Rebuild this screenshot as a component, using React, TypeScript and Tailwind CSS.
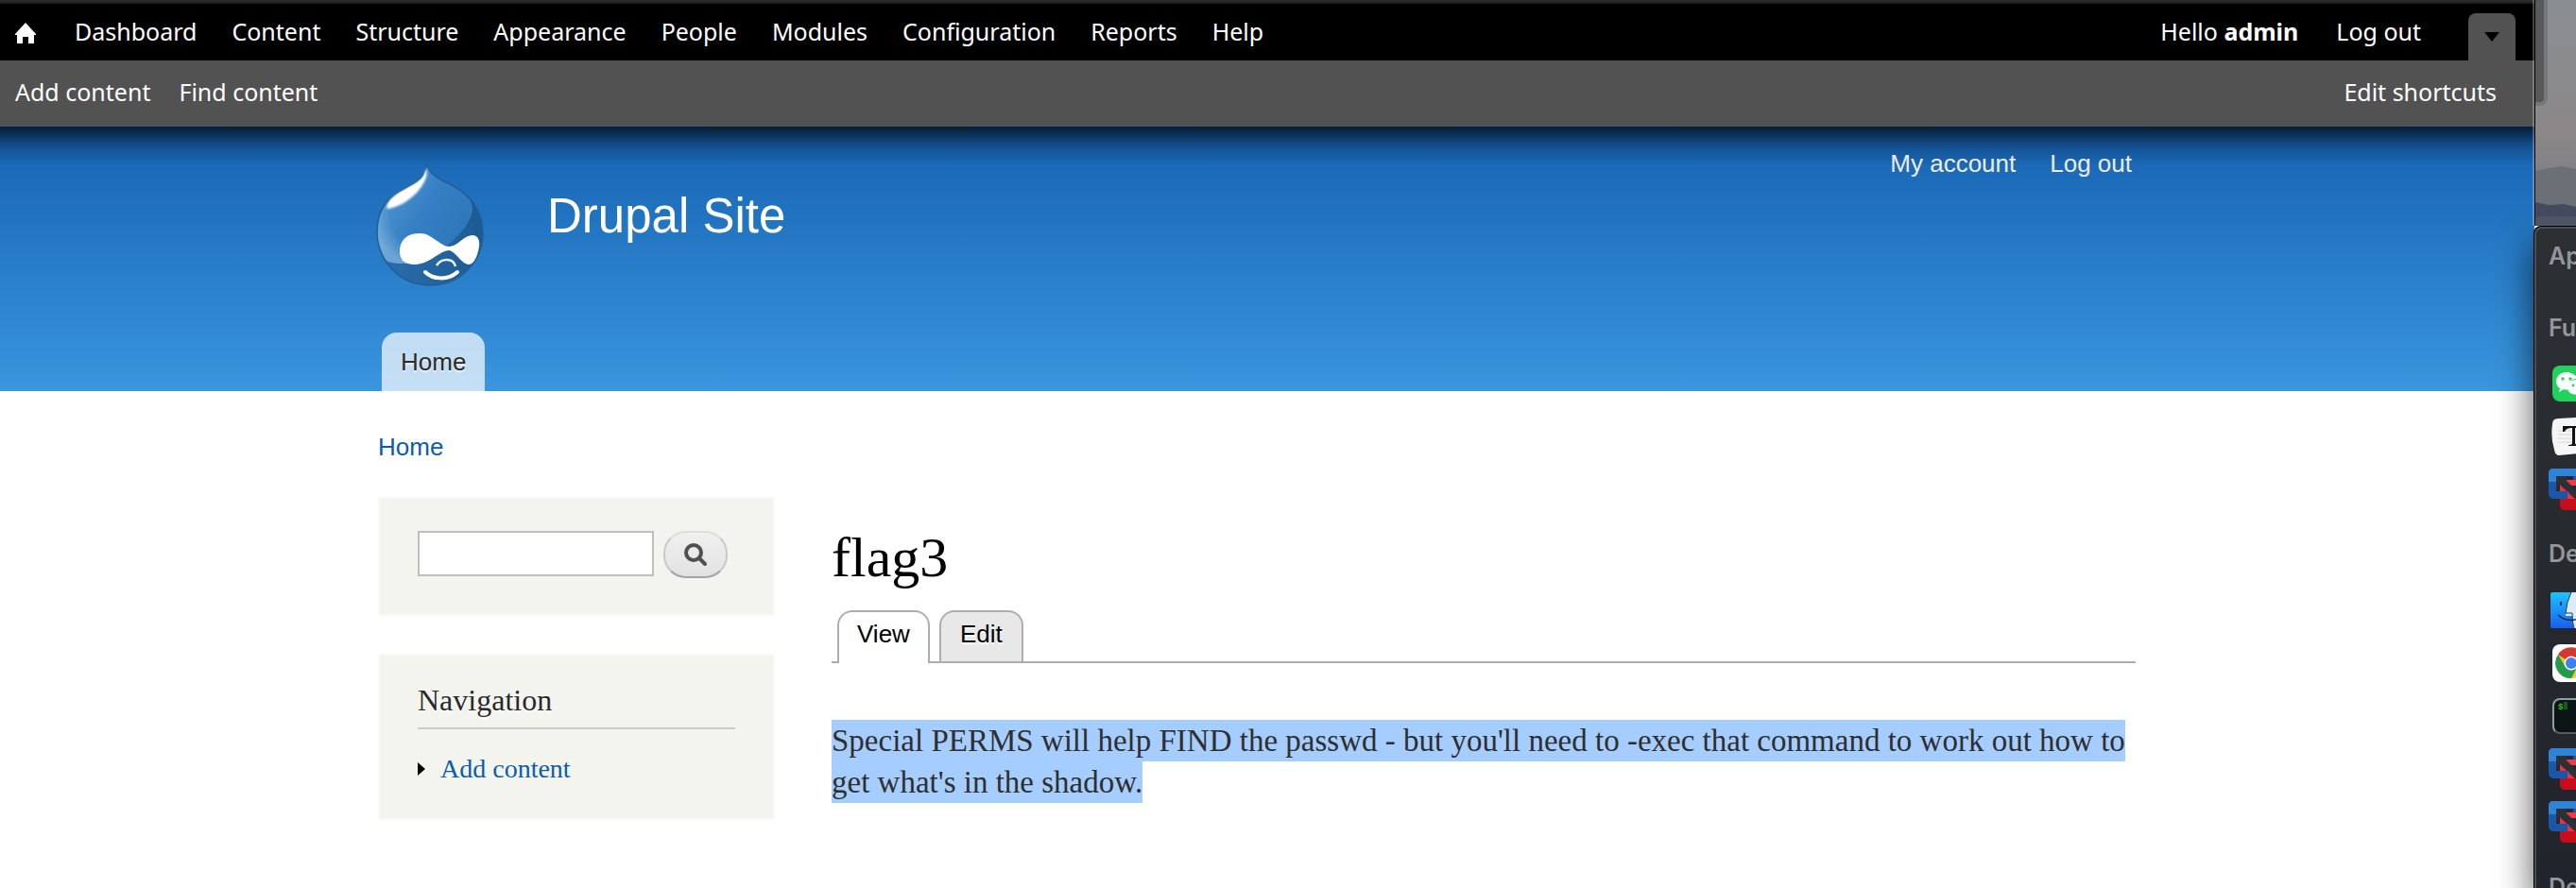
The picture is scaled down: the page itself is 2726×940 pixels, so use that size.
import React from "react";

const menu = ["Dashboard", "Content", "Structure", "Appearance", "People", "Modules", "Configuration", "Reports", "Help"];

function HomeIcon() {
  return (
    <svg viewBox="0 0 22 22" className="h-[22px] w-[22px]" fill="#fff" aria-hidden="true">
      <path d="M11 0 L22 12 L22 13 L20 13 L20 22 L14 22 L14 15 L8 15 L8 22 L2 22 L2 13 L0 13 L0 12 Z" />
    </svg>
  );
}

function Toolbar() {
  return (
    <div className="font-['Noto_Sans',sans-serif] text-[25px] leading-[34px] text-white">
      <div className="h-1 border-b-2 border-[#1d1b1c] bg-[#2c2a2b]" />
      <nav aria-label="Administration" className="flex h-[60px] items-stretch justify-between bg-black pr-5 pl-4 whitespace-nowrap">
        <ul className="flex items-center gap-[37px] pb-[3px]">
          <li className="mr-1 pt-1">
            <a href="#home" aria-label="Administration home" className="block"><HomeIcon /></a>
          </li>
          {menu.map((item) => (
            <li key={item}><a href={"#" + item.toLowerCase()}>{item}</a></li>
          ))}
        </ul>
        <div className="flex items-stretch">
          <div className="mr-[50px] flex items-center gap-10 pb-[3px]">
            <a href="#user">Hello <strong className="font-bold">admin</strong></a>
            <a href="#logout">Log out</a>
          </div>
          <button type="button" aria-label="Hide shortcuts" className="mt-[10px] flex h-[50px] w-[50px] items-center justify-center rounded-t-lg bg-[#525252]">
            <svg viewBox="0 0 16 10" className="h-[10px] w-4" aria-hidden="true"><path d="M0 0H16L8 10Z" fill="#000" /></svg>
          </button>
        </div>
      </nav>
      <div className="flex h-[70px] items-center justify-between bg-[#525252] pr-10 pb-[5px] pl-4">
        <div className="flex gap-[30px]">
          <a href="#add">Add content</a>
          <a href="#find">Find content</a>
        </div>
        <a href="#shortcuts">Edit shortcuts</a>
      </div>
    </div>
  );
}

function Druplicon() {
  return (
    <svg viewBox="0 0 114 130" className="h-[130px] w-[114px]" role="img" aria-label="Drupal">
      <defs>
        <linearGradient id="drop" x1="0" y1="0.1" x2="1" y2="0.8">
          <stop offset="0" stopColor="#5c9bd2" />
          <stop offset="0.5" stopColor="#3580c4" />
          <stop offset="1" stopColor="#2b74b8" />
        </linearGradient>
        <linearGradient id="shade" x1="0" y1="0" x2="1" y2="0">
          <stop offset="0" stopColor="#2b6fae" />
          <stop offset="1" stopColor="#1d5a93" />
        </linearGradient>
        <radialGradient id="rim" cx="0.55" cy="0.45" r="0.6">
          <stop offset="0.7" stopColor="#8fbde3" stopOpacity="0" />
          <stop offset="1" stopColor="#8fbde3" stopOpacity="0.6" />
        </radialGradient>
        <filter id="soft" x="-20%" y="-20%" width="140%" height="140%"><feGaussianBlur stdDeviation="1" /></filter>
        <clipPath id="dropClip"><path d="M53 0C55 8 63 15 74 20C96 30 113 47 113 74C113 105 88 129 57 129C25 129 1 103 1 72C1 52 9 39 24 30C38 22 53 17 53 0Z" /></clipPath>
      </defs>
      <g clipPath="url(#dropClip)">
        <rect width="114" height="130" fill="url(#shade)" />
        <path d="M53 0C60 14 72 19 82 24C98 34 104 42 101 53C97 68 86 78 74 88C60 100 46 106 24 106C13 105 7 103 0 94V0Z" fill="url(#drop)" />
        <path d="M53 0C60 14 72 19 82 24C98 34 104 42 101 53C97 68 86 78 74 88C60 100 46 106 24 106C13 105 7 103 0 94V0Z" fill="url(#rim)" />
      </g>
      <path d="M53 0C55 8 63 15 74 20C96 30 113 47 113 74C113 105 88 129 57 129C25 129 1 103 1 72C1 52 9 39 24 30C38 22 53 17 53 0Z" fill="none" stroke="#245f97" strokeWidth="1.6" />
      <path d="M53 4C56 12 51 22 43 31C33 41 22 47 11 48C12 38 22 32 32 27C43 21 53 16 53 4Z" fill="#fff" filter="url(#soft)" />
      <path d="M52 7C54 14 47 24 39 31C30 39 20 44 12 45C15 37 23 32 32 27C42 21 52 17 52 7Z" fill="#fff" />
      <path d="M46 74C58 73 68 88 77 88C86 88 93 76 102 76C108 76 110 82 109 88C108 96 104 107 98 107C91 107 83 92 77 92C68 92 56 107 41 107C30 107 25 102 25 93C25 81 33 74 46 74Z" fill="#fff" />
      <path d="M64 108C67 103 71 102 75 102C80 102 83 105 84 109" fill="none" stroke="#e8f1f8" strokeWidth="2.6" />
      <path d="M52 115C60 123 76 124 86 115" fill="none" stroke="#fff" strokeWidth="4" strokeLinecap="round" />
    </svg>
  );
}

function Header() {
  return (
    <header className="h-[280px] bg-[linear-gradient(to_bottom,rgba(0,0,0,0.7)_0,rgba(0,0,0,0.52)_8px,rgba(0,0,0,0.32)_16px,rgba(0,0,0,0.14)_26px,rgba(0,0,0,0)_42px),linear-gradient(to_bottom,#1562b1,#3a96de)] pr-[22px] font-['Liberation_Sans',Arial,sans-serif]">
      <div className="mx-auto flex h-full max-w-[1860px] flex-col justify-between">
        <div className="flex items-start">
          <a href="#front" className="mt-[39px] -ml-0.5"><Druplicon /></a>
          <a href="#front" className="mt-[66px] ml-[67px] text-[51px] leading-[58px] text-white">Drupal Site</a>
          <nav aria-label="User menu" className="mt-6 ml-auto flex gap-9 pr-1 text-[26px] leading-[30px] text-[#ececf0]">
            <a href="#account">My account</a>
            <a href="#logout">Log out</a>
          </nav>
        </div>
        <nav aria-label="Main menu" className="pl-1">
          <a href="#front" className="inline-block h-[62px] rounded-t-2xl bg-white/70 px-5 pt-4 align-bottom text-[26px] leading-[30px] text-[#2a2a2a] [text-shadow:0_2px_1px_#eee]">Home</a>
        </nav>
      </div>
    </header>
  );
}

function Sidebar() {
  return (
    <aside className="w-[420px] shrink-0 font-['Liberation_Serif',Georgia,serif]">
      <form role="search" onSubmit={(e) => e.preventDefault()} className="flex h-[126px] items-start gap-[10px] border-2 border-[#f8f8f7] bg-[#f3f4ee] px-10 pt-[34px]">
        <input type="text" aria-label="Search" className="h-12 w-[250px] border-2 border-[#bfbfbd] bg-white px-2 text-[26px] outline-none" />
        <button type="submit" aria-label="Search" className="flex h-[50px] w-[68px] items-center justify-center rounded-3xl border-2 border-[#c9c9c9] border-t-[#dedede] border-b-[#a3a3a3] bg-linear-to-b from-[#f0f0f0] to-[#e2e2e2]">
          <svg viewBox="0 0 26 26" className="h-[26px] w-[26px]" fill="none" stroke="#505050" aria-hidden="true">
            <circle cx="11" cy="11" r="8" strokeWidth="4" />
            <path d="M17 17L23 23" strokeWidth="4" strokeLinecap="round" />
          </svg>
        </button>
      </form>
      <section className="mt-10 h-[176px] border-2 border-[#f8f8f7] bg-[#f3f4ee] px-10 pt-7">
        <h2 className="border-b-2 border-[#cbcbc8] pb-[10px] text-[32px] leading-[38px] text-[#2a2a2a] [text-shadow:0_2px_0_#fff]">Navigation</h2>
        <ul className="pt-[26px]">
          <li className="flex items-center gap-4 text-[28px] leading-8 text-[#0b5cab]">
            <svg viewBox="0 0 8 14" className="h-[14px] w-2" aria-hidden="true"><path d="M0 0L8 7L0 14Z" fill="#000" /></svg>
            <a href="#add">Add content</a>
          </li>
        </ul>
      </section>
    </aside>
  );
}

function Article() {
  return (
    <article className="min-w-0 flex-1 font-['Liberation_Serif',Georgia,serif]">
      <h1 className="pt-[30px] text-[60px] leading-[68px] text-black">flag3</h1>
      <div className="mt-[22px] flex h-14 items-end gap-[10px] border-b-2 border-[#adadad] pl-1.5 font-['Liberation_Sans',Arial,sans-serif] text-[26px] leading-[30px] text-black">
        <a href="#view" className="-mb-0.5 h-14 rounded-t-2xl border-2 border-b-0 border-[#adadad] bg-white px-[19px] pt-2">View</a>
        <a href="#edit" className="h-[54px] rounded-t-2xl border-2 border-b-0 border-[#adadad] bg-[#e8e8e8] px-5 pt-2 [text-shadow:0_2px_0_#fff]">Edit</a>
      </div>
      <p className="pt-[60px] text-[33px] leading-[44px] text-[#2f2f2f]">
        <mark className="bg-[#a5cdff] pt-1 pb-1 text-inherit">
          Special PERMS will help FIND the passwd - but you&apos;ll need to -exec that command to work out how to get what&apos;s in the shadow.
        </mark>
      </p>
    </article>
  );
}

function WeChat() {
  return (
    <svg viewBox="0 0 38 38" className="h-[38px] w-[38px] shrink-0" aria-hidden="true">
      <rect width="38" height="38" rx="8" fill="#1fd35c" />
      <path d="M15 7C9 7 4 11 4 17C4 20 6 23 8 24L7 28L12 25Q14 26 17 25C16 18 21 13 27 14C25 10 20 7 15 7Z" fill="#fff" />
      <path d="M26 15C20 15 16 18 16 23C16 29 22 32 28 30L32 32L31 29C39 23 34 15 26 15Z" fill="#fff" />
      <g fill="#1fd35c"><circle cx="11" cy="14" r="1.7" /><circle cx="19" cy="14" r="1.7" /><circle cx="22" cy="21" r="1.4" /><circle cx="29" cy="21" r="1.4" /></g>
    </svg>
  );
}

function Typora() {
  return (
    <svg viewBox="0 0 42 42" className="h-[42px] w-[42px] shrink-0" aria-hidden="true">
      <path d="M2 8Q2 2 8 2L42 0V38L9 41Q5 41 4 35Q0 22 2 8Z" fill="#f5f5f5" />
      <path d="M8 15H26M8 19H26M8 23H26M8 27H26" stroke="#d5d5d5" />
      <path d="M13 10H35V16H33Q32 12 26 12V28Q26 30 30 30V31H19V30Q23 30 23 28V12Q16 12 15 16H13Z" fill="#111" />
    </svg>
  );
}

function Fusion() {
  return (
    <svg viewBox="0 0 44 44" className="h-11 w-11 shrink-0" aria-hidden="true">
      <path d="M12 24H44V44H18Q12 44 12 38Z" fill="#c50d1c" />
      <path d="M8 8H44V30H8Z" fill="#252b30" />
      <path d="M18 12H44V18H24Z" fill="#ee3a47" />
      <path d="M0 5Q0 0 5 0H44V12H26V8H8V24H22V32H6Q0 32 0 26Z" fill="#1958a9" />
      <path d="M0 5Q0 0 5 0H44V8H8V14H0Z" fill="#2f83d6" />
      <path d="M12 17L28 32H20V24H12Z" fill="#f02f3e" />
      <path d="M8 8H20L17 12L38 32H28L13 16L8 20Z" fill="#2b3137" />
    </svg>
  );
}

function Finder() {
  return (
    <svg viewBox="0 0 38 38" className="h-[38px] w-[38px] shrink-0" aria-hidden="true">
      <defs><linearGradient id="finder" x1="0" y1="0" x2="0" y2="1"><stop offset="0" stopColor="#1cc4fb" /><stop offset="1" stopColor="#1a5eee" /></linearGradient></defs>
      <rect width="38" height="38" rx="2" fill="url(#finder)" />
      <path d="M22 0H38V38H25Q23 33 23 25H16Q17 10 22 0Z" fill="#dfeaf7" />
      <path d="M11 10V14" stroke="#0c2947" strokeWidth="2" />
      <path d="M22 0Q17 10 16 22H23Q23 32 25 38" fill="none" stroke="#193d64" strokeWidth="1" />
      <path d="M8 24Q18 33 32 27" fill="none" stroke="#0c2947" strokeWidth="1.5" />
    </svg>
  );
}

function Chrome() {
  return (
    <svg viewBox="0 0 40 40" className="h-10 w-10 shrink-0" aria-hidden="true">
      <rect width="40" height="40" rx="8" fill="#fff" />
      <circle cx="20" cy="20" r="16" fill="#f9c22e" />
      <path d="M20 20L6 11A16 16 0 0 1 34 12Z" fill="#d2382d" />
      <path d="M6 11A16 16 0 0 0 20 36L26 24L14 24Z" fill="#249a4d" />
      <circle cx="20" cy="20" r="7.5" fill="#fff" />
      <circle cx="20" cy="20" r="6" fill="#3f7ff0" />
    </svg>
  );
}

function Terminal() {
  return (
    <div className="h-[38px] w-[38px] shrink-0 rounded-lg border-2 border-[#8fa0a3] border-b-[#5b5b5b] bg-[#0d1416] pt-0.5 pl-1 font-['Liberation_Mono',monospace] text-[9px] leading-[12px] font-bold text-[#1fc42c]">
      $<span className="ml-px inline-block h-2 w-1 bg-[#0d6117]" />
    </div>
  );
}

function Dock() {
  return (
    <aside aria-label="Applications" className="relative z-20 flex w-11 shrink-0 flex-col">
      <div className="-ml-0.5 flex h-[239px] border-l-2 border-white/25">
        <div className="relative flex-1 border-l border-black bg-linear-to-b from-[#8a8e93] via-[#8c8788] via-60% to-[#707780]">
          <div className="h-[112px] w-[13px] rounded-br-lg border-r-4 border-b-4 border-[#75787b] bg-[#57595c]" />
          <svg viewBox="0 0 43 64" preserveAspectRatio="none" className="absolute bottom-0 left-0 h-16 w-full" aria-hidden="true">
            <path d="M0 6L14 3L28 1L43 4V64H0Z" fill="#6b7076" />
            <path d="M0 39L14 42L30 41L43 44V64H0Z" fill="#434a5e" />
            <path d="M0 54H43V64H0Z" fill="#4d5564" />
          </svg>
        </div>
      </div>
      <div className="-ml-px flex min-h-0 flex-1 rounded-tl-lg shadow-[-2px_20px_36px_rgba(0,0,0,0.6)]">
        <div className="flex min-w-0 flex-1 flex-col items-start overflow-hidden rounded-tl-lg border-t border-l border-black bg-[#25292e]">
          <div className="flex w-full flex-1 flex-col overflow-hidden rounded-tl-lg border-t-2 border-l-2 border-[#4a4d51] bg-linear-to-b from-[#2d3033] to-[#20242b] pl-[13px] font-['Inter',sans-serif] text-[25px] leading-[30px] font-semibold whitespace-nowrap text-[#94969a]">
            <span className="mt-[14px] shrink-0">Ap</span>
            <span className="mt-[46px] shrink-0">Fu</span>
            <div className="mt-[25px] ml-1 flex"><WeChat /></div>
            <div className="mt-[16px] ml-0.5 flex"><Typora /></div>
            <div className="mt-[13px] flex"><Fusion /></div>
            <span className="mt-[31px] shrink-0">De</span>
            <div className="mt-[26px] ml-0.5 flex"><Finder /></div>
            <div className="mt-[17px] ml-1 flex"><Chrome /></div>
            <div className="mt-[17px] ml-1 flex"><Terminal /></div>
            <div className="mt-[15px] flex"><Fusion /></div>
            <div className="mt-3 flex"><Fusion /></div>
            <span className="mt-[32px] shrink-0">De</span>
          </div>
        </div>
      </div>
    </aside>
  );
}

export default function App() {
  return (
    <div className="flex h-screen overflow-hidden bg-white">
      <div className="min-w-0 flex-1 overflow-hidden">
        <Toolbar />
        <Header />
        <main className="pr-[22px]">
          <div className="mx-auto max-w-[1860px]">
            <nav aria-label="Breadcrumb" className="pt-11 font-['Liberation_Sans',Arial,sans-serif] text-[26px] leading-[30px] text-[#0b5cab]">
              <a href="#front">Home</a>
            </nav>
            <div className="mt-[38px] flex items-start gap-[60px]">
              <Sidebar />
              <Article />
            </div>
          </div>
        </main>
      </div>
      <Dock />
    </div>
  );
}
